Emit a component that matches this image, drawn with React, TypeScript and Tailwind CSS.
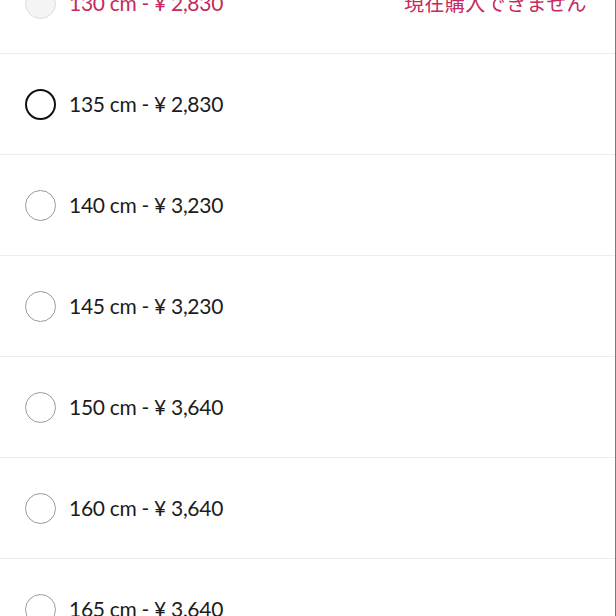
const sizes = [
  { label: '130 cm - ¥ 2,830', disabled: true },
  { label: '135 cm - ¥ 2,830', active: true },
  { label: '140 cm - ¥ 3,230' },
  { label: '145 cm - ¥ 3,230' },
  { label: '150 cm - ¥ 3,640' },
  { label: '160 cm - ¥ 3,640' },
  { label: '165 cm - ¥ 3,640' },
]

type Size = { label: string; disabled?: boolean; active?: boolean }

function SizeRow({ size }: { size: Size }) {
  const ring = size.disabled
    ? 'border-[#dcdcdc] bg-[#f4f4f4]'
    : size.active
      ? 'border-[#111] border-2'
      : 'border-[#9a9a9a] border-[1.5px]'

  return (
    <div className="flex h-[101px] items-center border-b border-[#ececec] pl-[25px] pr-[28px]">
      <span className={`h-[31px] w-[31px] shrink-0 rounded-full border ${ring}`} />
      <span
        className={`ml-[13px] text-[21px] tracking-[-0.3px] ${size.disabled ? 'text-[#c42a5c]' : 'text-[#1c1c1c]'}`}
      >
        {size.label}
      </span>
      {size.disabled && (
        <span className="ml-auto text-[20px] tracking-[0.4px] text-[#c42a5c] [font-family:'Noto_Sans_CJK_JP',sans-serif]">
          現在購入できません
        </span>
      )}
    </div>
  )
}

export default function App() {
  return (
    <div className="h-[616px] w-[616px] overflow-hidden border-r border-[#7a7a7a] bg-white [font-family:Lato,'Noto_Sans_CJK_JP',sans-serif]">
      <div className="-mt-[47px]">
        {sizes.map((size) => (
          <SizeRow key={size.label} size={size} />
        ))}
      </div>
    </div>
  )
}
